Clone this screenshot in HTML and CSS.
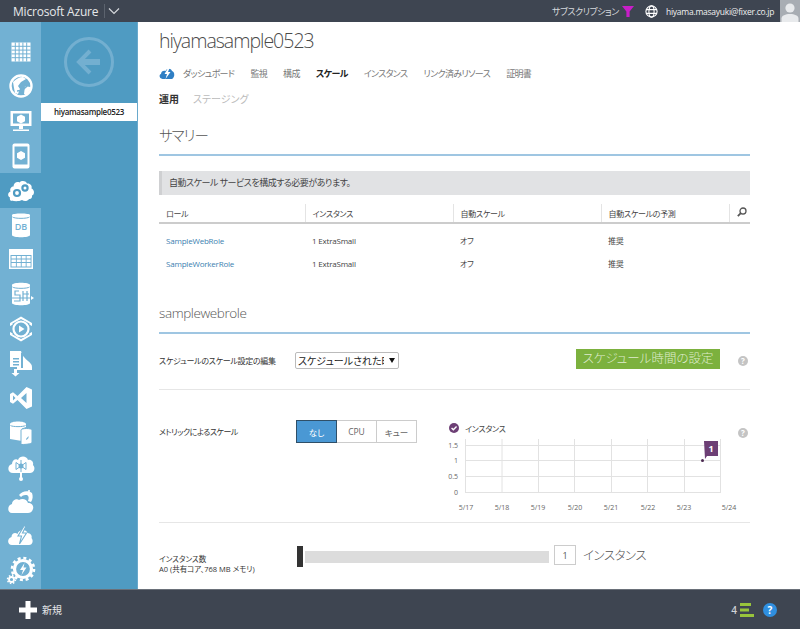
FILE: index.html
```html
<!DOCTYPE html>
<html lang="ja">

<head>
    <meta charset="UTF-8">
    <meta name="viewport" content="width=device-width, initial-scale=1.0">
    <title>hiyamasample0523 - Microsoft Azure</title>
    <link rel="stylesheet" href="styles.css">
</head>

<body>

    <div class="topbar">
        <span class="brand">Microsoft Azure</span>
        <span class="brand-menu">
            <svg width="12" height="8" viewBox="0 0 12 8"><path d="M1 1.500l5 5 5-5" fill="none" stroke="#d5d8dc" stroke-width="1.200"/></svg>
        </span>
        <div class="topbar-right">
            <span class="sub-label">サブスクリプション</span>
            <svg class="funnel" width="12" height="11" viewBox="0 0 12 11"><path d="M0 0h12L7.600 5.500V11H4.400V5.500z" fill="#c81ec8"/></svg>
            <svg class="globe" width="13" height="13" viewBox="0 0 13 13" fill="none" stroke="#fff" stroke-width="1.100"><circle cx="6.500" cy="6.500" r="5.600"/><ellipse cx="6.500" cy="6.500" rx="2.600" ry="5.600"/><path d="M1 4.600h11M1 8.400h11"/></svg>
            <span class="email">hiyama.masayuki@fixer.co.jp</span>
            <span class="avatar">
                <svg width="20" height="22" viewBox="0 0 20 22"><circle cx="10" cy="8" r="4.600" fill="#e8eaec"/><path d="M1.500 22v-3.500c0-3 4-4.500 8.500-4.500s8.500 1.500 8.500 4.500V22z" fill="#e8eaec"/></svg>
            </span>
        </div>
    </div>

    <div class="middle">
        <nav class="rail">
            <a class="rail-item"><svg viewBox="0 0 30 30"><path d="M5.500 5.500h19v19h-19z" fill="#fff"/><path d="M9.300 5.500v19M13.100 5.500v19M16.900 5.500v19M20.700 5.500v19M5.500 9.300h19M5.500 13.100h19M5.500 16.900h19M5.500 20.700h19" stroke="#72b1d3" stroke-width="1"/></svg></a>
            <a class="rail-item"><svg viewBox="0 0 30 30"><circle cx="15" cy="15" r="10.500" fill="none" stroke="#fff" stroke-width="2.400"/><path d="M7 11c3-3 6-5 10-5l3 2-5 3-3 4 2 3-2 5-3-1-1-5zM19 15l5 1 0 3-3 4-3 0z" fill="#fff"/><path d="M11 20c4 0 9-3 12-8" fill="none" stroke="#72b1d3" stroke-width="1.600"/></svg></a>
            <a class="rail-item"><svg viewBox="0 0 30 30"><path d="M4.500 5h21v15h-21z" fill="#fff"/><path d="M7 7.500h16v10H7z" fill="#72b1d3"/><path d="M15 8.500l4 2.200v4.500L15 17.500l-4-2.300v-4.500z" fill="#fff"/><path d="M13 20h4v3h-4zM7 23.500h16v1.500H7z" fill="#fff"/></svg></a>
            <a class="rail-item"><svg viewBox="0 0 30 30"><rect x="6.500" y="2.500" width="17" height="25" rx="2" fill="#fff"/><path d="M8.500 5.500h13v18h-13z" fill="#72b1d3"/><path d="M15 10l4 2.200v4.600L15 19l-4-2.200v-4.600z" fill="#fff"/></svg></a>
            <a class="rail-item rail-selected"><svg viewBox="0 0 30 30"><path d="M6 26c-2 0-2.500-2-2-3.500-2.500-1-2.500-5 .5-6-1-3 1-5 3-5 0-3 3-5.500 6-4 2-2 6-2 7.500 1 3-.5 5.500 2 4.500 5 3 1 3.500 6 .5 7 .5 2-1 4-3 3.500-1.500 2.500-5 2.500-7 1-3 1.500-7 1.500-10.500.5z" fill="#fff"/><circle cx="11" cy="18" r="3" fill="none" stroke="#4f9bc2" stroke-width="2.200"/><circle cx="19" cy="13" r="2.600" fill="none" stroke="#4f9bc2" stroke-width="2.200"/></svg></a>
            <a class="rail-item"><svg viewBox="0 0 30 30"><path d="M6 5c0-2 18-2 18 0v20c0 3-18 3-18 0z" fill="#fff"/><path d="M6.500 7c2 1.800 15 1.800 17 0" fill="none" stroke="#72b1d3" stroke-width="1"/><text x="15" y="20" class="rail-db">DB</text></svg></a>
            <a class="rail-item"><svg viewBox="0 0 30 30"><path d="M3 5h24v20H3z" fill="#fff"/><path d="M4.500 11h21v12.500h-21z" fill="#72b1d3"/><path d="M5.500 12h4.400v2.600H5.500zM10.800 12h4v2.600h-4zM15.700 12h4v2.600h-4zM20.600 12h4v2.600h-4zM5.500 15.500h4.400v2.600H5.500zM10.800 15.500h4v2.600h-4zM15.700 15.500h4v2.600h-4zM20.600 15.500h4v2.600h-4zM5.500 19h4.400v3.400H5.500zM10.800 19h4v3.400h-4zM15.700 19h4v3.400h-4zM20.600 19h4v3.400h-4z" fill="#fff"/></svg></a>
            <a class="rail-item"><svg viewBox="0 0 30 30"><path d="M6 6c0-3 18-3 18 0v18c0 3-18 3-18 0z" fill="#fff"/><path d="M6.500 8c2 1.800 15 1.800 17 0" fill="none" stroke="#72b1d3" stroke-width="1"/><path d="M4 19h23M13 12H9v4h5v6H8M17 12v10M21 12v10M17 15h6" fill="none" stroke="#72b1d3" stroke-width="1.200"/><path d="M25 17l3 2-3 2z" fill="#fff"/></svg></a>
            <a class="rail-item"><svg viewBox="0 0 30 30"><path d="M15 2.500L26 9v3l-2.500-1.300V9.500L15 5 6.500 9.500v1.200L4 12V9zM4 18l2.500 1.300v1.200L15 25l8.500-4.500v-1.200L26 18v3l-11 6.500L4 21z" fill="#fff"/><circle cx="15" cy="15" r="7.500" fill="none" stroke="#fff" stroke-width="2.200"/><path d="M13 11.500l5.500 3.500-5.500 3.500z" fill="#fff"/></svg></a>
            <a class="rail-item"><svg viewBox="0 0 30 30"><path d="M4 3h11l0 19h-4v-3H4z" fill="#fff"/><path d="M15 3c1 5 4 7 7 10 2 2 4 3 4 6v3H15z" fill="#fff"/><path d="M15 5h2v15h-2z" fill="#72b1d3"/><path d="M7 10h6v1.500H7zM7 13h6v1.500H7zM7 16h6v1.500H7z" fill="#72b1d3"/><path d="M8 21h3v4h2.500l-4 3.500-4-3.500H8z" fill="#fff"/></svg></a>
            <a class="rail-item"><svg viewBox="0 0 30 30"><path d="M20.500 4L26 6.500v17L20.500 26l-9-9-4.500 3.800L4 19v-8l3-1.800 4.500 3.800zM20.500 10l-5.500 5 5.500 5zM7 12.500v5l2.500-2.500z" fill="#fff"/></svg></a>
            <a class="rail-item"><svg viewBox="0 0 30 30"><path d="M4 7c0-3.500 16-3.500 16 0v3l-4 1.500V24l-12-2z" fill="#fff"/><path d="M4.500 8.500c2 1.500 13 1.500 15 0" fill="none" stroke="#72b1d3" stroke-width="1"/><path d="M15 13c0-2 11-2 11 0v12c0 1.500-3 2.500-11 2.500z" fill="#fff" stroke="#72b1d3" stroke-width="1"/><path d="M20 22l2.500-3v2l-2 2z" fill="#72b1d3"/></svg></a>
            <a class="rail-item"><svg viewBox="0 0 30 30"><path d="M7 21c-6 0-6-8-1-9 0-4 4-6 6-4 2-5 9-4 10 0 3-1 6 2 5 5 3 3 1 8-3 8z" fill="#fff"/><path d="M15 8v12M10 10.500l10 7M20 10.500l-10 7M10 10.500v7M20 10.500v7" fill="none" stroke="#72b1d3" stroke-width="1"/><circle cx="15" cy="14" r="2.500" fill="#72b1d3"/><path d="M14 20h2v6h-2z" fill="#fff"/><circle cx="15" cy="27" r="2" fill="#fff"/></svg></a>
            <a class="rail-item"><svg viewBox="0 0 30 30"><path d="M6 26c-5 0-5-8 0-9 0-4 5-6 7-4 3-2 8-1 9 3 4 0 6 3 5 6-1 3-3 4-5 4z" fill="#fff"/><path d="M13 8c3-4 9-5 13-2 1 3 1 6-1 9l-3-1c1-3 1-5-1-6-2 0-4 0-6 2z" fill="#fff"/><path d="M23 3v4h-4" fill="none" stroke="#fff" stroke-width="1.600"/></svg></a>
            <a class="rail-item"><svg viewBox="0 0 30 30"><path d="M6 24c-5 0-5-7-.5-8 0-4 4-5 6-3 1-4 8-6 10-1 3 0 5 3 4 5 2 2 1.500 7-2.500 7z" fill="#fff"/><path d="M18 5l-6 10h3.500l-2 8 7-11h-4l3.500-7z" fill="#fff" stroke="#72b1d3" stroke-width="1.100"/></svg></a>
            <a class="rail-item"><svg viewBox="0 0 30 30"><circle cx="17" cy="13" r="8.500" fill="none" stroke="#fff" stroke-width="3.200"/><circle cx="17" cy="13" r="11" fill="none" stroke="#fff" stroke-width="2.600" stroke-dasharray="3 2.760"/><path d="M18.500 7l-4.500 7h3l-1.500 5 5-7.500h-3z" fill="#fff"/><circle cx="5.500" cy="23.500" r="2.500" fill="none" stroke="#fff" stroke-width="1.800"/><circle cx="5.500" cy="23.500" r="4" fill="none" stroke="#fff" stroke-width="1.500" stroke-dasharray="1.500 1.640"/></svg></a>
        </nav>

        <aside class="subnav">
            <div class="back">
                <svg width="52" height="52" viewBox="0 0 52 52" fill="none" stroke="#73afd0" stroke-width="3"><circle cx="26" cy="26" r="23.500"/><path d="M27 15L16 26l11 11" stroke-width="4"/><path d="M17 26h20" stroke-width="6"/></svg>
            </div>
            <div class="subnav-item">hiyamasample0523</div>
        </aside>

        <main class="content">
            <h1 class="title">hiyamasample0523</h1>

            <div class="tabs">
                <svg class="tab-icon" width="16" height="11" viewBox="0 0 16 11"><path d="M3.500 11C.5 11-.5 7 2 6c0-3 3-4 4.500-3C8 0 12 0 13 3c2.500.5 3.500 5.500 0 8z" fill="#2f7fc4"/><path d="M9 0L5.500 6H8L6.500 11l5-7H9l1.500-4z" fill="#fff"/></svg>
                <a class="tab">ダッシュボード</a>
                <a class="tab">監視</a>
                <a class="tab">構成</a>
                <a class="tab tab-active">スケール</a>
                <a class="tab">インスタンス</a>
                <a class="tab">リンク済みリソース</a>
                <a class="tab">証明書</a>
            </div>

            <div class="subtabs">
                <a class="subtab subtab-active">運用</a>
                <a class="subtab">ステージング</a>
            </div>

            <h2 class="section-head section-summary">サマリー</h2>

            <div class="notice">自動スケール サービスを構成する必要があります。</div>

            <table class="roles">
                <thead>
                    <tr>
                        <th class="col-role">ロール</th>
                        <th class="col-inst">インスタンス</th>
                        <th class="col-auto">自動スケール</th>
                        <th class="col-pred">自動スケールの予測</th>
                        <th class="col-search">
                            <svg width="10" height="10" viewBox="0 0 10 10" fill="none" stroke="#555" stroke-width="1.300"><circle cx="6" cy="4" r="3"/><path d="M3.800 6.200L.8 9.200" stroke-width="1.800"/></svg>
                        </th>
                    </tr>
                </thead>
                <tbody>
                    <tr>
                        <td><a class="role-link">SampleWebRole</a></td>
                        <td>1 ExtraSmall</td>
                        <td>オフ</td>
                        <td>推奨</td>
                        <td></td>
                    </tr>
                    <tr>
                        <td><a class="role-link">SampleWorkerRole</a></td>
                        <td>1 ExtraSmall</td>
                        <td>オフ</td>
                        <td>推奨</td>
                        <td></td>
                    </tr>
                </tbody>
            </table>

            <h2 class="section-head section-role">samplewebrole</h2>

            <div class="form-row row-schedule">
                <label class="row-label">スケジュールのスケール設定の編集</label>
                <div class="select-wrap">
                    <select class="schedule-select">
                        <option>スケジュールされた時間なし</option>
                    </select>
                </div>
                <button class="green-btn">スケジュール時間の設定</button>
                <span class="help">?</span>
            </div>

            <div class="form-row row-metric">
                <label class="row-label metric-label">メトリックによるスケール</label>
                <div class="toggle">
                    <button class="toggle-btn toggle-on">なし</button>
                    <button class="toggle-btn">CPU</button>
                    <button class="toggle-btn">キュー</button>
                </div>
                <div class="chart">
                    <div class="chart-legend">
                        <svg width="10" height="10" viewBox="0 0 11 11"><circle cx="5.500" cy="5.500" r="5.500" fill="#6d3f75"/><path d="M2.800 5.500l2 2 3.500-3.700" fill="none" stroke="#fff" stroke-width="1.500"/></svg>
                        <span>インスタンス</span>
                    </div>
                    <svg class="chart-plot" width="290" height="84" viewBox="0 0 290 84">
                        <g stroke="#e2e2e2" fill="none">
                            <path d="M17.500 0v53M54 0v53M90.500 0v53M126.500 0v53M163.500 0v53M199.500 0v53M236.500 0v53M272.500 0v53"/>
                            <path d="M17 6.500h256M17 21.500h256M17 37.500h256M17 53.500h256"/>
                        </g>
                        <g class="axis-y">
                            <text x="10" y="9">1.5</text>
                            <text x="10" y="24">1</text>
                            <text x="10" y="40">0.5</text>
                            <text x="10" y="56">0</text>
                        </g>
                        <g class="axis-x">
                            <text x="18" y="71">5/17</text>
                            <text x="54" y="71">5/18</text>
                            <text x="90" y="71">5/19</text>
                            <text x="127" y="71">5/20</text>
                            <text x="163" y="71">5/21</text>
                            <text x="200" y="71">5/22</text>
                            <text x="236" y="71">5/23</text>
                            <text x="281" y="71">5/24</text>
                        </g>
                        <circle cx="254.500" cy="21.500" r="1.500" fill="#4b2a52"/>
                        <path d="M256 2h14v15h-11l-2 3z" fill="#6d3f75"/>
                        <text x="263" y="13" class="flag-text">1</text>
                    </svg>
                </div>
                <span class="help help-metric">?</span>
            </div>

            <div class="form-row row-instances">
                <label class="row-label instances-label">インスタンス数<br>A0 (共有コア、768 MB メモリ)</label>
                <div class="slider">
                    <span class="slider-thumb"></span>
                    <span class="slider-track"></span>
                </div>
                <input class="count-input" type="text" value="1">
                <span class="count-unit">インスタンス</span>
            </div>
        </main>
    </div>

    <div class="footer">
        <button class="new-btn">
            <svg width="18" height="18" viewBox="0 0 18 18"><path d="M6.500 0h5v6.500H18v5h-6.500V18h-5v-6.500H0v-5h6.500z" fill="#fff"/></svg>
            <span>新規</span>
        </button>
        <div class="footer-right">
            <span class="op-count">4</span>
            <svg width="14" height="15" viewBox="0 0 14 15"><path d="M0 1h11v3H0zM0 6.500h9v3H0zM0 12h14v3H0z" fill="#98c43c"/></svg>
            <span class="footer-help">?</span>
        </div>
    </div>

</body>

</html>
```

FILE: styles.css
```css
* {
    box-sizing: border-box;
}

html,
body {
    margin: 0;
    height: 100%;
    overflow: hidden;
}

body {
    display: flex;
    flex-direction: column;
    font-family: "Open Sans", "Noto Sans CJK JP", sans-serif;
    font-feature-settings: "palt";
    font-size: 9px;
    color: #333;
    background-color: #fff;
}

/* top bar */
.topbar {
    flex: 0 0 22px;
    display: flex;
    align-items: center;
    padding-left: 13px;
    background-color: #3e4551;
    color: #e6e8ea;
}

.brand {
    font-size: 12px;
    width: 91px;
    white-space: nowrap;
    letter-spacing: -0.2px;
}

.brand-menu {
    display: flex;
    align-items: center;
    height: 14px;
    padding-left: 3px;
    border-left: 1px solid #5c636e;
}

.topbar-right {
    margin-left: auto;
    display: flex;
    align-items: center;
}

.sub-label {
    width: 70px;
    font-size: 9px;
    letter-spacing: -0.5px;
    color: #d5d8dc;
    white-space: nowrap;
}

.funnel {
    margin-right: 11px;
}

.globe {
    margin-right: 8px;
}

.email {
    width: 114px;
    font-size: 8.500px;
    letter-spacing: -0.25px;
    color: #f0f0f0;
    white-space: nowrap;
}

.avatar {
    display: flex;
    width: 20px;
    height: 22px;
    background-color: #a8adb3;
}

/* side navigation */
.middle {
    flex: 1;
    display: flex;
    min-height: 0;
}

.rail {
    flex: 0 0 41px;
    padding-top: 12.6px;
    background-color: #72b1d3;
}

.rail-item {
    display: flex;
    align-items: center;
    justify-content: center;
    height: 34.6px;
}

.rail-item svg {
    width: 30px;
    height: 30px;
    flex: none;
}

.rail-selected {
    background-color: #4f9bc2;
}

.rail-db {
    font-size: 9px;
    font-weight: 600;
    fill: #72b1d3;
    text-anchor: middle;
}

.subnav {
    flex: 0 0 97px;
    background-color: #4f9bc2;
    border-right: 1px solid #69a9cc;
}

.back {
    display: flex;
    justify-content: center;
    padding: 14px 0 15px 0;
    height: 81px;
}

.subnav-item {
    height: 18px;
    line-height: 18px;
    text-align: center;
    font-size: 8px;
    letter-spacing: -0.3px;
    font-weight: 600;
    color: #222;
    background-color: #fff;
}

/* main content */
.content {
    flex: 1;
    min-width: 0;
    padding: 0 50px 0 21px;
    overflow: hidden;
}

.title {
    margin: 0;
    height: 40px;
    padding-top: 5px;
    font-size: 19.500px;
    letter-spacing: -1px;
    line-height: 28px;
    font-weight: 300;
    color: #4a4a4a;
}

.tabs {
    display: flex;
    align-items: center;
    height: 22px;
    margin-bottom: 6px;
    font-size: 9px;
    letter-spacing: -0.65px;
    white-space: nowrap;
}

.tab-icon {
    margin-right: 8px;
}

.tab {
    margin-right: 16px;
    color: #777;
}

.tab-active {
    color: #222;
    font-weight: 600;
}

.subtabs {
    display: flex;
    align-items: center;
    height: 16px;
    font-size: 10px;
}

.subtab {
    margin-right: 14px;
    color: #bbb;
}

.subtab-active {
    color: #333;
    font-weight: 700;
}

.section-head {
    margin: 0;
    font-weight: 300;
    color: #555;
    border-bottom: 2px solid #9fc6e2;
}

.section-summary {
    height: 50px;
    padding-top: 18px;
    font-size: 14.500px;
    letter-spacing: -1px;
    line-height: 24px;
}

.notice {
    height: 24px;
    margin-top: 15px;
    padding-left: 7px;
    line-height: 24px;
    font-size: 9px;
    letter-spacing: -0.5px;
    color: #444;
    background-color: #e1e2e4;
    border-left: 3px solid #cfd0d2;
}

.roles {
    width: 591px;
    margin-top: 9px;
    border-collapse: collapse;
    table-layout: fixed;
}

.roles th {
    height: 19px;
    padding: 0 0 0 7px;
    font-weight: 400;
    font-size: 8px;
    letter-spacing: -0.3px;
    text-align: left;
    color: #444;
    border-bottom: 2px solid #ccc;
    border-left: 1px solid #e4e4e4;
}

.roles th:first-child {
    border-left: none;
}

.col-role {
    width: 146px;
}

.col-inst {
    width: 148px;
}

.col-auto {
    width: 148px;
}

.col-pred {
    width: 128px;
}

.roles td {
    height: 21px;
    padding: 0 0 0 7px;
    font-size: 8px;
    letter-spacing: -0.2px;
    color: #444;
}

.roles tbody tr:first-child td {
    height: 30px;
    padding-top: 4px;
}

.role-link {
    color: #3c7fb0;
}

.section-role {
    height: 43px;
    margin-top: 17px;
    padding-top: 12px;
    font-size: 13.500px;
    letter-spacing: -0.4px;
    line-height: 20px;
}

.form-row {
    display: flex;
    border-bottom: 1px solid #e6e6e6;
}

.row-label {
    flex: 0 0 136px;
    font-size: 8px;
    letter-spacing: -0.3px;
    color: #333;
    white-space: nowrap;
}

.row-schedule {
    align-items: center;
    height: 56px;
    padding-bottom: 2px;
}

.select-wrap {
    position: relative;
    width: 104px;
    height: 17px;
}

/* small arrow drawn over the select */
.select-wrap::after {
    content: "";
    position: absolute;
    right: 4px;
    top: 6px;
    border-left: 3px solid transparent;
    border-right: 3px solid transparent;
    border-top: 5px solid #111;
}

.schedule-select {
    display: block;
    width: 104px;
    height: 17px;
    padding: 0 14px 0 2px;
    appearance: none;
    font-family: inherit;
    font-feature-settings: "palt";
    font-size: 10px;
    color: #222;
    background-color: #fff;
    border: 1px solid #bbb;
    border-radius: 2px;
}

.green-btn {
    width: 144px;
    height: 20px;
    margin-left: auto;
    margin-bottom: 4px;
    padding: 0;
    border: none;
    font-family: inherit;
    font-feature-settings: "palt";
    font-size: 12.500px;
    font-weight: 300;
    line-height: 20px;
    color: #dfeccd;
    background-color: #7cb13e;
}

.help {
    flex: none;
    width: 10px;
    height: 10px;
    margin-left: 18px;
    margin-right: 2px;
    border-radius: 50%;
    text-align: center;
    font-size: 8px;
    line-height: 10px;
    font-weight: 700;
    color: #fff;
    background-color: #c4c4c4;
}

.row-metric {
    position: relative;
    height: 133px;
    padding-top: 30px;
}

.metric-label {
    flex-basis: 137px;
    padding-top: 6px;
    letter-spacing: -0.5px;
}

.toggle {
    display: flex;
    width: 121px;
    height: 23px;
}

.toggle-btn {
    flex: 1;
    padding: 0;
    font-family: inherit;
    font-feature-settings: "palt";
    font-size: 8.500px;
    color: #666;
    background-color: #fff;
    border: 1px solid #ccc;
    border-left: none;
}

.toggle-on {
    color: #fff;
    background-color: #4a98d4;
    border: 1px solid #2f4f68;
}

.chart {
    margin-left: 31px;
    margin-top: 2px;
    width: 290px;
}

.chart-legend {
    display: flex;
    align-items: center;
    gap: 6px;
    height: 12px;
    margin-left: 1px;
    font-size: 8px;
    letter-spacing: -0.3px;
    color: #444;
}

.chart-plot {
    display: block;
    margin-top: 5px;
}

.axis-y text {
    font-size: 7px;
    fill: #666;
    text-anchor: end;
}

.axis-x text {
    font-size: 7px;
    fill: #666;
    text-anchor: middle;
}

.flag-text {
    font-size: 9px;
    font-weight: 700;
    fill: #fff;
    text-anchor: middle;
}

.help-metric {
    position: absolute;
    right: 2px;
    top: 38px;
    margin: 0;
}

.row-instances {
    align-items: flex-start;
    border-bottom: none;
    padding-top: 22px;
}

.instances-label {
    flex-basis: 138px;
    padding-top: 9px;
    font-size: 7.500px;
    letter-spacing: 0;
    line-height: 10px;
}

.slider {
    display: flex;
    align-items: center;
    width: 252px;
    height: 21px;
    margin-top: 1px;
}

.slider-thumb {
    flex: 0 0 6px;
    height: 21px;
    background-color: #333;
}

.slider-track {
    flex: 0 0 244px;
    height: 12px;
    margin-left: 2px;
    background-color: #dcdcdc;
}

.count-input {
    width: 22px;
    height: 20px;
    margin-left: 5px;
    padding: 0;
    border: 1px solid #ccc;
    text-align: center;
    font-family: inherit;
    font-size: 9px;
    color: #555;
}

.count-unit {
    margin-left: 7px;
    font-size: 12.500px;
    letter-spacing: -0.5px;
    line-height: 22px;
    font-weight: 300;
    color: #555;
}

/* footer */
.footer {
    flex: 0 0 40px;
    display: flex;
    align-items: center;
    padding: 0 23px 0 19px;
    background-color: #3e4551;
    border-top: 1px solid #6a7079;
}

.new-btn {
    display: flex;
    align-items: center;
    gap: 5px;
    padding: 0;
    border: none;
    font-family: inherit;
    font-size: 10px;
    color: #e6e8ea;
    background: none;
}

.footer-right {
    display: flex;
    align-items: center;
    margin-left: auto;
}

.op-count {
    margin-right: 3px;
    font-size: 10px;
    font-weight: 600;
    color: #d0d3d6;
}

.footer-help {
    width: 14px;
    height: 14px;
    margin-left: 9px;
    border-radius: 50%;
    text-align: center;
    font-size: 10px;
    line-height: 14px;
    font-weight: 700;
    color: #fff;
    background-color: #2f8fe0;
}
```
